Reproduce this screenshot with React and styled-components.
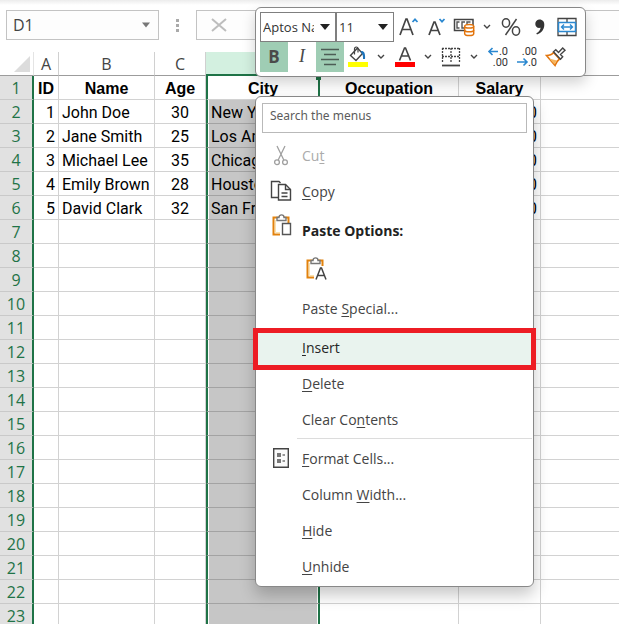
import { useState } from 'react'
import styled, { createGlobalStyle } from 'styled-components'

const uiFont = `"Open Sans", "Noto Sans", sans-serif`
const cellFont = `Roboto, "Liberation Sans", sans-serif`
const boldCellFont = `"Liberation Sans", sans-serif`
const green = '#1f7347'

const GlobalStyle = createGlobalStyle`
  * { box-sizing: border-box; }
  body {
    margin: 0;
    background: #fff;
    color: #444;
    font-family: ${uiFont};
  }
  button, input, select { font-family: inherit; color: inherit; }
  svg { display: block; flex: none; }
`

const Page = styled.div`
  position: relative;
  height: 100vh;
  overflow: hidden;
`

/* formula bar */

const FormulaBar = styled.div`
  display: flex;
  align-items: center;
  height: 52px;
  padding: 0 0 2px 6px;
  background: linear-gradient(#ececec, #fff 5px);
`

const NameBox = styled.label`
  display: flex;
  align-items: center;
  width: 153px;
  height: 30px;
  padding: 0 8px 0 6px;
  border: 1px solid #c3c3c3;
  background: #fdfdfd;
`

const PlainInput = styled.input`
  flex: 1;
  min-width: 0;
  padding: 0;
  border: none;
  outline: none;
  background: transparent;
  font-size: 16px;
`

const Dots = styled.div`
  width: 37px;
  display: flex;
  justify-content: center;
`

const FormulaBox = styled.div`
  flex: 1;
  display: flex;
  align-items: center;
  height: 30px;
  border: 1px solid #c3c3c3;
  border-right: none;
  background: #fdfdfd;
`

const CancelBtn = styled.button`
  display: flex;
  padding: 0 14px;
  border: none;
  background: transparent;
`

/* sheet */

const Sheet = styled.table`
  width: 100%;
  table-layout: fixed;
  border-collapse: separate;
  border-spacing: 0;

  tr > :last-child { border-right: none; }
`

const ColHead = styled.th`
  height: 24px;
  padding: 0;
  border-right: 1px solid #d0d0d0;
  border-bottom: ${props => props.$active ? `2px solid ${green}` : '1px solid #9c9c9c'};
  background: ${props => props.$active ? '#d3f0e0' : '#fff'};
  font-size: 16px;
  font-weight: 400;
  line-height: 22px;
`

const Corner = styled(ColHead)`
  border-right-color: #e4e4e4;

  svg { margin: 2px 0 0 14px; }
`

const RowHead = styled.th`
  height: 24px;
  padding: 0;
  border-right: 2px solid ${green};
  border-bottom: 1px solid #c9c9c9;
  background: #e1e1e1;
  color: ${green};
  font-size: 16px;
  font-weight: 400;
  line-height: 22px;
`

const Cell = styled.td`
  height: 24px;
  padding: 2px 3px 0;
  border-right: 1px solid #d2d2d2;
  border-bottom: 1px solid #d2d2d2;
  color: #000;
  font-family: ${props => props.$bold ? boldCellFont : cellFont};
  font-size: 16px;
  font-weight: ${props => props.$bold ? 700 : 400};
  line-height: 21px;
  text-align: ${props => props.$align || 'left'};
  white-space: nowrap;
  overflow: hidden;
`

const SelectedCell = styled(Cell)`
  border-left: 2px solid ${green};
  border-right: 2px solid ${green};
  border-bottom-color: ${props => props.$first ? '#d2d2d2' : '#a3a3a3'};
  background: ${props => props.$first ? '#fff' : '#c6c6c6'};
  box-shadow: inset 1px 0 #fff, inset -1px 0 #fff;
`

const FillHandle = styled.span`
  position: absolute;
  left: 316px;
  top: 74px;
  width: 5px;
  height: 6px;
  background: ${green};
`

/* mini toolbar */

const MiniToolbar = styled.div`
  position: absolute;
  left: 255px;
  top: 7px;
  padding: 4px 5px 4px 4px;
  border: 1px solid #888;
  border-radius: 6px;
  background: #fff;
  box-shadow: 0 6px 14px rgba(0, 0, 0, .18);
`

const ToolRow = styled.div`
  display: flex;
  align-items: center;
  height: 30px;
`

const SelectWrap = styled.label`
  position: relative;
  width: ${props => props.$width}px;

  svg {
    position: absolute;
    right: 6px;
    top: 12px;
    pointer-events: none;
  }
`

const Select = styled.select`
  appearance: none;
  display: block;
  width: 100%;
  height: 30px;
  padding: 0 21px 0 2px;
  border: 1px solid #7f7f7f;
  border-radius: 0;
  background: #fff;
  color: #333;
  font-size: 13px;
`

const ToolBtn = styled.button`
  display: flex;
  align-items: center;
  justify-content: center;
  width: ${props => props.$width || 28}px;
  height: 30px;
  padding: 0;
  border: none;
  background: ${props => props.$on ? '#9fcdb4' : 'transparent'};
`

/* context menu */

const Menu = styled.div`
  position: absolute;
  left: 255px;
  top: 96px;
  width: 279px;
  padding: 6px 0 2px;
  border: 1px solid #888;
  border-radius: 6px;
  background: #fff;
  box-shadow: 0 8px 16px rgba(0, 0, 0, .22);
`

const SearchBox = styled.input`
  display: block;
  width: 265px;
  height: 30px;
  margin: 0 6px 4px;
  padding: 0 7px 6px;
  border: 1px solid #b9b9b9;
  outline: none;
  font-family: "Noto Sans", sans-serif;
  font-size: 12px;

  &::placeholder { color: #5c5c5c; opacity: 1; }
`

const MenuItem = styled.button`
  display: flex;
  align-items: center;
  width: 100%;
  height: ${props => props.$height || 36}px;
  padding: 0 0 0 14px;
  border: none;
  background: transparent;
  color: #444;
  font-size: 14px;
  text-align: left;

  &:disabled { color: #ababab; }
  u { text-underline-offset: 2px; }
`

const HighlightItem = styled(MenuItem)`
  position: relative;
  width: auto;
  min-width: calc(100% + 6px);
  height: 42px;
  margin: 0 -3px -5px;
  padding: 0 0 3px 12px;
  border: 5px solid #ed1c24;
  background: #e9f3ee;
  color: #262626;
`

const MenuTitle = styled.div`
  display: flex;
  align-items: center;
  height: 42px;
  padding-left: 14px;
  color: #222;
  font-size: 14px;
  font-weight: 700;

  svg { margin-bottom: 10px; }
`

const IconSlot = styled.span`
  display: flex;
  justify-content: center;
  width: 22px;
  margin-right: 10px;
`

const PasteBtn = styled.button`
  display: flex;
  align-items: center;
  height: 37px;
  margin-left: 46px;
  padding: 0 2px 2px;
  border: none;
  background: transparent;
`

const Separator = styled.hr`
  height: 1px;
  margin: 1px 1px 1px 41px;
  border: none;
  background: #dcdcdc;
`

/* icons */

const Caret = ({ color = '#222', w = 10 }) => (
  <svg width={w} height="6" viewBox="0 0 10 6"><path d="M0 0h10L5 6z" fill={color} /></svg>
)

const Chevron = () => (
  <svg width="8" height="6" viewBox="0 0 8 6"><path d="M1 1l3 3 3-3" fill="none" stroke="#444" strokeWidth="1.4" /></svg>
)

const FontSizeIcon = ({ up }) => (
  <svg width="20" height="20" viewBox="0 0 20 20" fill="none">
    {up
      ? <path d="M1 18L7 2h1l6 16M3.200 12.500h8.600" stroke="#444" strokeWidth="1.700" />
      : <path d="M2 18L7 5h1l5 13M4 13.500h7" stroke="#444" strokeWidth="1.700" />}
    <path d={up ? 'M13.500 5L16 2.300 18.500 5' : 'M12.500 2L15 4.700 17.500 2'} stroke="#2b88d0" strokeWidth="1.700" />
  </svg>
)

const MoneyIcon = () => (
  <svg width="22" height="20" viewBox="0 0 22 20" fill="none">
    <path d="M11 13.500H1.500v-11h18.500V8" stroke="#444" strokeWidth="1.500" />
    <path d="M6.500 5H4v6h2.500M12 5H9v6h2M17.500 5H14v3" stroke="#555" strokeWidth="1.400" />
    <path d="M11.700 9.300v7.400c0 1 2 1.800 4.500 1.800s4.500-.8 4.500-1.800V9.300" fill="#fff" stroke="#e2740c" strokeWidth="1.500" />
    <ellipse cx="16.200" cy="9.300" rx="4.500" ry="1.800" fill="#fff" stroke="#e2740c" strokeWidth="1.500" />
    <path d="M11.700 13c0 1 2 1.800 4.500 1.800s4.500-.8 4.500-1.800" stroke="#e2740c" strokeWidth="1.500" />
  </svg>
)

const PercentIcon = () => (
  <svg width="20" height="20" viewBox="0 0 20 20" fill="none" stroke="#444" strokeWidth="1.500">
    <ellipse cx="5" cy="6" rx="3.600" ry="4.200" />
    <ellipse cx="15" cy="14" rx="3.600" ry="4.200" />
    <path d="M15.500 2L4.500 18" />
  </svg>
)

const CommaIcon = () => (
  <svg width="12" height="18" viewBox="0 0 12 18">
    <path d="M5 1.500C8.300 1.200 10.500 3.500 10.300 7c-.2 4.500-2.800 8-7.300 9.500l-.7-1.200C5 14 6.400 12 6.600 9.800 3.400 10.500 1.300 8.600 1.300 6 1.300 3.500 2.800 1.700 5 1.500z" fill="#333" />
  </svg>
)

const MergeIcon = () => (
  <svg width="20" height="20" viewBox="0 0 20 20" fill="none">
    <path d="M1 1.500h18v17H1zM10 1v5M10 14v5" stroke="#444" strokeWidth="1.300" />
    <path d="M1.500 5.500h17v9h-17z" fill="#fff" stroke="#2b88d0" strokeWidth="1.500" />
    <path d="M4.500 10h11M7 7.500L4.500 10 7 12.500M13 7.500l2.500 2.500-2.500 2.500" stroke="#2b88d0" strokeWidth="1.400" />
  </svg>
)

const BoldIcon = () => (
  <svg width="20" height="20" viewBox="0 0 20 20">
    <text x="10" y="16" textAnchor="middle" fontFamily="Open Sans" fontSize="17" fontWeight="700" fill="#4a4a4a">B</text>
  </svg>
)

const ItalicIcon = () => (
  <svg width="20" height="20" viewBox="0 0 20 20">
    <text x="10" y="15" textAnchor="middle" fontFamily="Liberation Serif" fontSize="18" fontStyle="italic" fill="#4a4a4a">I</text>
  </svg>
)

const CenterIcon = () => (
  <svg width="18" height="18" viewBox="0 0 18 18" stroke="#4d5d55" strokeWidth="1.300">
    <path d="M0 1.500h18M3 6.500h12M0 11.500h18M3 16.500h12" />
  </svg>
)

const FillIcon = () => (
  <svg width="22" height="22" viewBox="0 0 22 22" fill="none">
    <path d="M3.500 9.500L10.500 2l5 5.500-6.500 7z" fill="#fff" stroke="#444" strokeWidth="1.400" />
    <path d="M7.500 8.500V3c0-2.700 3.500-2.700 3.500 0v3.500" stroke="#444" strokeWidth="1.200" />
    <path d="M13.500 5c3.500-.5 5 2 4.500 8h-2c.2-3-.5-4.500-1-5z" fill="#1f74ba" />
    <path d="M1 16h20v5H1z" fill="#ff0" />
  </svg>
)

const FontColorIcon = () => (
  <svg width="22" height="22" viewBox="0 0 22 22" fill="none">
    <path d="M5.500 14.500L10.500 2h1l5 12.500M7.500 10h7" stroke="#444" strokeWidth="1.600" />
    <path d="M1 16h20v5H1z" fill="red" />
  </svg>
)

const BorderIcon = () => (
  <svg width="20" height="20" viewBox="0 0 20 20" fill="none" stroke="#444">
    <path d="M1 1.500h18M1.500 1v15M18.500 1v15M1 9.500h18M10 1v15" strokeWidth="1.300" strokeDasharray="2 1" />
    <path d="M1 18.500h18" strokeWidth="1.800" />
  </svg>
)

const DecimalIcon = ({ increase }) => (
  <svg width="22" height="24" viewBox="0 0 22 24" fill="none">
    <text x="21" y="10" textAnchor="end" fontFamily="Roboto" fontSize="11" fill="#333">{increase ? '.0' : '.00'}</text>
    <text x="21" y="21" textAnchor="end" fontFamily="Roboto" fontSize="11" fill="#333">{increase ? '.00' : '.0'}</text>
    <path
      d={increase ? 'M11 6.500H2M5.500 3L2 6.500 5.500 10' : 'M1 17h10M7.500 13.500L11 17l-3.500 3.500'}
      stroke="#2b88d0"
      strokeWidth="1.600"
    />
  </svg>
)

const BrushIcon = () => (
  <svg width="22" height="22" viewBox="0 0 22 22" fill="none">
    <path d="M1.500 9.500C5 9.500 7 8.500 8.500 6.500l6 6.500c-2 1.500-3.500 3.500-4.500 6.500z" fill="#fff" stroke="#e2740c" strokeWidth="1.600" />
    <path d="M4 12.500l8 2-2.500 4z" fill="#f6b45c" />
    <path d="M8.500 5.800l2.300-2 2.700 2.700 4.200-4.500 2.300 2.200-4.500 4.300 2.200 2.200-2.200 2.600z" fill="#fff" stroke="#444" strokeWidth="1.400" />
  </svg>
)

const CutIcon = () => (
  <svg width="16" height="21" viewBox="0 0 16 21" fill="none" stroke="#a0a0a0" strokeWidth="1.300">
    <path d="M4 1l6.800 14M12 1L5.200 15" />
    <circle cx="4" cy="17.200" r="2.400" />
    <circle cx="12" cy="17.200" r="2.400" />
  </svg>
)

const CopyIcon = () => (
  <svg width="22" height="22" viewBox="0 0 22 22" fill="none" stroke="#444" strokeWidth="1.400">
    <path d="M8 17.500H1.500v-16H9L10.500 3" />
    <path d="M8.500 4.500h7l5 5v10.500h-12z" fill="#fff" />
    <path d="M15.500 4.500v5h5M11.500 13h6M11.500 16.500h6" />
  </svg>
)

const ClipIcon = ({ letter }) => (
  <svg width="23" height="25" viewBox="0 0 23 25" fill="none">
    <path d="M10 21.500H3.500V4.500h15V10" stroke="#e2820c" strokeWidth="2" />
    <path d="M10 19.500H5.500V7" stroke="#fbe3ae" strokeWidth="1" />
    <path d="M7 7.500V4.500h2c0-3.500 5-3.500 5 0h2v3z" fill="#fff" stroke="#777" strokeWidth="1.400" />
    {letter
      ? <path d="M12 23.500L16.500 12h1L22 23.500M13.500 19.500h7" stroke="#444" strokeWidth="1.500" />
      : <path d="M12.500 10.500h8v11h-8z" fill="#fff" stroke="#555" strokeWidth="1.400" />}
  </svg>
)

const FormatIcon = () => (
  <svg width="16" height="20" viewBox="0 0 16 20" fill="none">
    <path d="M.7.700h14.600v18.600H.700z" fill="#fafafa" stroke="#444" strokeWidth="1.400" />
    <path d="M4 5h4v4H4zM4 11h4v4H4z" fill="#777" />
    <path d="M9.500 7H12M9.500 13H12" stroke="#777" strokeWidth="1.400" />
  </svg>
)

const columns = ['A', 'B', 'C', 'D', 'E', 'F', '']
const widths = [25, 96, 51, 114, 139, 82]
const aligns = ['right', 'left', 'center', 'left', 'left', 'right', 'left']

const data = [
  ['ID', 'Name', 'Age', 'City', 'Occupation', 'Salary'],
  ['1', 'John Doe', '30', 'New York', 'Engineer', '$70,000'],
  ['2', 'Jane Smith', '25', 'Los Angeles', 'Designer', '$60,000'],
  ['3', 'Michael Lee', '35', 'Chicago', 'Manager', '$80,000'],
  ['4', 'Emily Brown', '28', 'Houston', 'Analyst', '$65,000'],
  ['5', 'David Clark', '32', 'San Francisco', 'Developer', '$75,000'],
]

function Grid() {
  let rows = Array.from({ length: 23 }, (_, i) => data[i] || [])

  return (
    <Sheet>
      <colgroup>
        <col width="34" />
        {widths.map((w, i) => <col key={i} width={w} />)}
        <col />
      </colgroup>
      <thead>
        <tr>
          <Corner>
            <svg width="17" height="17" viewBox="0 0 17 17"><path d="M16 0v16H0z" fill="#dcdcdc" /></svg>
          </Corner>
          {columns.map((c, i) => <ColHead key={i} $active={c == 'D'}>{c}</ColHead>)}
        </tr>
      </thead>
      <tbody>
        {rows.map((row, r) => (
          <tr key={r}>
            <RowHead>{r + 1}</RowHead>
            {columns.map((c, i) => {
              let Td = c == 'D' ? SelectedCell : Cell
              return (
                <Td key={i} $bold={r == 0} $first={r == 0} $align={r == 0 ? 'center' : aligns[i]}>
                  {row[i]}
                </Td>
              )
            })}
          </tr>
        ))}
      </tbody>
    </Sheet>
  )
}

function Toolbar() {
  return (
    <MiniToolbar>
      <ToolRow>
        <SelectWrap $width={76}>
          <Select aria-label="Font"><option>Aptos Narrow</option></Select>
          <Caret />
        </SelectWrap>
        <SelectWrap $width={58}>
          <Select aria-label="Font size" defaultValue="11">
            <option>10</option>
            <option>11</option>
            <option>12</option>
          </Select>
          <Caret />
        </SelectWrap>
        <ToolBtn $width={30} aria-label="Increase font size"><FontSizeIcon up /></ToolBtn>
        <ToolBtn $width={26} aria-label="Decrease font size"><FontSizeIcon /></ToolBtn>
        <ToolBtn aria-label="Accounting format"><MoneyIcon /></ToolBtn>
        <ToolBtn $width={18} aria-label="More accounting formats"><Chevron /></ToolBtn>
        <ToolBtn $width={30} aria-label="Percent style"><PercentIcon /></ToolBtn>
        <ToolBtn aria-label="Comma style"><CommaIcon /></ToolBtn>
        <ToolBtn $width={26} aria-label="Merge and center"><MergeIcon /></ToolBtn>
      </ToolRow>
      <ToolRow>
        <ToolBtn $on aria-label="Bold"><BoldIcon /></ToolBtn>
        <ToolBtn aria-label="Italic"><ItalicIcon /></ToolBtn>
        <ToolBtn $on aria-label="Center"><CenterIcon /></ToolBtn>
        <ToolBtn aria-label="Fill color"><FillIcon /></ToolBtn>
        <ToolBtn $width={18} aria-label="More fill colors"><Chevron /></ToolBtn>
        <ToolBtn $width={30} aria-label="Font color"><FontColorIcon /></ToolBtn>
        <ToolBtn $width={16} aria-label="More font colors"><Chevron /></ToolBtn>
        <ToolBtn $width={30} aria-label="Borders"><BorderIcon /></ToolBtn>
        <ToolBtn $width={16} aria-label="More borders"><Chevron /></ToolBtn>
        <ToolBtn $width={32} aria-label="Increase decimal"><DecimalIcon increase /></ToolBtn>
        <ToolBtn $width={26} aria-label="Decrease decimal"><DecimalIcon /></ToolBtn>
        <ToolBtn $width={32} aria-label="Format painter"><BrushIcon /></ToolBtn>
      </ToolRow>
    </MiniToolbar>
  )
}

function ContextMenu() {
  let [search, setSearch] = useState('')

  return (
    <Menu>
      <SearchBox
        aria-label="Search the menus"
        placeholder="Search the menus"
        value={search}
        onChange={(e) => { setSearch(e.target.value) }}
      />
      <MenuItem disabled><IconSlot><CutIcon /></IconSlot><span>Cu<u>t</u></span></MenuItem>
      <MenuItem><IconSlot><CopyIcon /></IconSlot><span><u>C</u>opy</span></MenuItem>
      <MenuTitle><IconSlot><ClipIcon /></IconSlot>Paste Options:</MenuTitle>
      <PasteBtn aria-label="Keep text only"><ClipIcon letter /></PasteBtn>
      <MenuItem $height={40}><IconSlot /><span>Paste <u>S</u>pecial...</span></MenuItem>
      <HighlightItem><IconSlot /><span><u>I</u>nsert</span></HighlightItem>
      <MenuItem><IconSlot /><span><u>D</u>elete</span></MenuItem>
      <MenuItem><IconSlot /><span>Clear Co<u>n</u>tents</span></MenuItem>
      <Separator />
      <MenuItem><IconSlot><FormatIcon /></IconSlot><span><u>F</u>ormat Cells...</span></MenuItem>
      <MenuItem><IconSlot /><span>Column <u>W</u>idth...</span></MenuItem>
      <MenuItem><IconSlot /><span><u>H</u>ide</span></MenuItem>
      <MenuItem><IconSlot /><span><u>U</u>nhide</span></MenuItem>
    </Menu>
  )
}

function App() {
  let [name, setName] = useState('D1')

  return (
    <Page>
      <GlobalStyle />
      <FormulaBar>
        <NameBox>
          <PlainInput aria-label="Name box" value={name} onChange={(e) => { setName(e.target.value) }} />
          <Caret color="#777" w={8} />
        </NameBox>
        <Dots>
          <svg width="3" height="13" viewBox="0 0 3 13"><path d="M0 0h3v3H0zM0 5h3v3H0zM0 10h3v3H0z" fill="#aaa" /></svg>
        </Dots>
        <FormulaBox>
          <CancelBtn aria-label="Cancel">
            <svg width="16" height="14" viewBox="0 0 16 14"><path d="M1 1l14 12M15 1L1 13" stroke="#bdbdbd" strokeWidth="2" /></svg>
          </CancelBtn>
        </FormulaBox>
      </FormulaBar>
      <Grid />
      <FillHandle />
      <Toolbar />
      <ContextMenu />
    </Page>
  )
}

export default App
